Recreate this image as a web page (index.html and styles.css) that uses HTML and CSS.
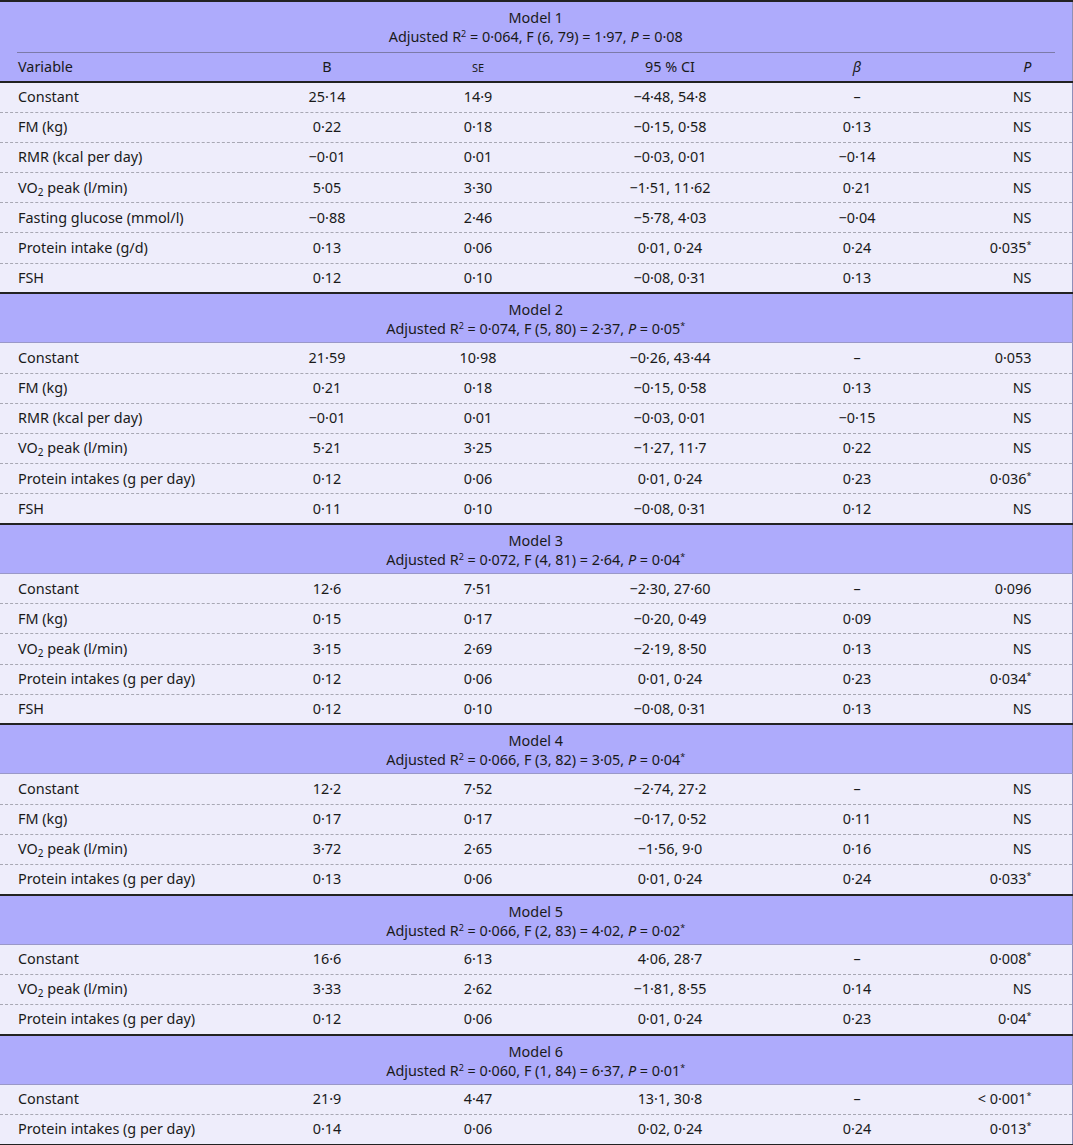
FILE: index.html
```html
<!DOCTYPE html>
<html lang="en">
<head>
  <meta charset="UTF-8">
  <title>Regression models</title>
  <link rel="stylesheet" href="styles.css">
</head>
<body>
  <table class="models">
    <colgroup>
      <col class="c-var"><col class="c-b"><col class="c-se"><col class="c-ci"><col class="c-beta"><col class="c-p">
    </colgroup>

    <tbody class="group first">
      <tr class="model-head">
        <td colspan="6">
          <div class="title ruled">Model 1<br>Adjusted R<sup>2</sup> = 0·064, F (6, 79) = 1·97, <i>P</i> = 0·08</div>
        </td>
      </tr>
      <tr class="col-head">
        <td>Variable</td><td>B</td><td><span class="sc">se</span></td><td>95 % CI</td><td><i>β</i></td><td><i>P</i></td>
      </tr>
      <tr><td>Constant</td><td>25·14</td><td>14·9</td><td>−4·48, 54·8</td><td>–</td><td>NS</td></tr>
      <tr><td>FM (kg)</td><td>0·22</td><td>0·18</td><td>−0·15, 0·58</td><td>0·13</td><td>NS</td></tr>
      <tr><td>RMR (kcal per day)</td><td>−0·01</td><td>0·01</td><td>−0·03, 0·01</td><td>−0·14</td><td>NS</td></tr>
      <tr><td>VO<sub>2</sub> peak (l/min)</td><td>5·05</td><td>3·30</td><td>−1·51, 11·62</td><td>0·21</td><td>NS</td></tr>
      <tr><td>Fasting glucose (mmol/l)</td><td>−0·88</td><td>2·46</td><td>−5·78, 4·03</td><td>−0·04</td><td>NS</td></tr>
      <tr><td>Protein intake (g/d)</td><td>0·13</td><td>0·06</td><td>0·01, 0·24</td><td>0·24</td><td>0·035<sup>*</sup></td></tr>
      <tr><td>FSH</td><td>0·12</td><td>0·10</td><td>−0·08, 0·31</td><td>0·13</td><td>NS</td></tr>
    </tbody>

    <tbody class="group">
      <tr class="model-head">
        <td colspan="6"><div class="title">Model 2<br>Adjusted R<sup>2</sup> = 0·074, F (5, 80) = 2·37, <i>P</i> = 0·05<sup>*</sup></div></td>
      </tr>
      <tr><td>Constant</td><td>21·59</td><td>10·98</td><td>−0·26, 43·44</td><td>–</td><td>0·053</td></tr>
      <tr><td>FM (kg)</td><td>0·21</td><td>0·18</td><td>−0·15, 0·58</td><td>0·13</td><td>NS</td></tr>
      <tr><td>RMR (kcal per day)</td><td>−0·01</td><td>0·01</td><td>−0·03, 0·01</td><td>−0·15</td><td>NS</td></tr>
      <tr><td>VO<sub>2</sub> peak (l/min)</td><td>5·21</td><td>3·25</td><td>−1·27, 11·7</td><td>0·22</td><td>NS</td></tr>
      <tr><td>Protein intakes (g per day)</td><td>0·12</td><td>0·06</td><td>0·01, 0·24</td><td>0·23</td><td>0·036<sup>*</sup></td></tr>
      <tr><td>FSH</td><td>0·11</td><td>0·10</td><td>−0·08, 0·31</td><td>0·12</td><td>NS</td></tr>
    </tbody>

    <tbody class="group">
      <tr class="model-head">
        <td colspan="6"><div class="title">Model 3<br>Adjusted R<sup>2</sup> = 0·072, F (4, 81) = 2·64, <i>P</i> = 0·04<sup>*</sup></div></td>
      </tr>
      <tr><td>Constant</td><td>12·6</td><td>7·51</td><td>−2·30, 27·60</td><td>–</td><td>0·096</td></tr>
      <tr><td>FM (kg)</td><td>0·15</td><td>0·17</td><td>−0·20, 0·49</td><td>0·09</td><td>NS</td></tr>
      <tr><td>VO<sub>2</sub> peak (l/min)</td><td>3·15</td><td>2·69</td><td>−2·19, 8·50</td><td>0·13</td><td>NS</td></tr>
      <tr><td>Protein intakes (g per day)</td><td>0·12</td><td>0·06</td><td>0·01, 0·24</td><td>0·23</td><td>0·034<sup>*</sup></td></tr>
      <tr><td>FSH</td><td>0·12</td><td>0·10</td><td>−0·08, 0·31</td><td>0·13</td><td>NS</td></tr>
    </tbody>

    <tbody class="group">
      <tr class="model-head">
        <td colspan="6"><div class="title">Model 4<br>Adjusted R<sup>2</sup> = 0·066, F (3, 82) = 3·05, <i>P</i> = 0·04<sup>*</sup></div></td>
      </tr>
      <tr><td>Constant</td><td>12·2</td><td>7·52</td><td>−2·74, 27·2</td><td>–</td><td>NS</td></tr>
      <tr><td>FM (kg)</td><td>0·17</td><td>0·17</td><td>−0·17, 0·52</td><td>0·11</td><td>NS</td></tr>
      <tr><td>VO<sub>2</sub> peak (l/min)</td><td>3·72</td><td>2·65</td><td>−1·56, 9·0</td><td>0·16</td><td>NS</td></tr>
      <tr><td>Protein intakes (g per day)</td><td>0·13</td><td>0·06</td><td>0·01, 0·24</td><td>0·24</td><td>0·033<sup>*</sup></td></tr>
    </tbody>

    <tbody class="group">
      <tr class="model-head">
        <td colspan="6"><div class="title">Model 5<br>Adjusted R<sup>2</sup> = 0·066, F (2, 83) = 4·02, <i>P</i> = 0·02<sup>*</sup></div></td>
      </tr>
      <tr><td>Constant</td><td>16·6</td><td>6·13</td><td>4·06, 28·7</td><td>–</td><td>0·008<sup>*</sup></td></tr>
      <tr><td>VO<sub>2</sub> peak (l/min)</td><td>3·33</td><td>2·62</td><td>−1·81, 8·55</td><td>0·14</td><td>NS</td></tr>
      <tr><td>Protein intakes (g per day)</td><td>0·12</td><td>0·06</td><td>0·01, 0·24</td><td>0·23</td><td>0·04<sup>*</sup></td></tr>
    </tbody>

    <tbody class="group">
      <tr class="model-head">
        <td colspan="6"><div class="title">Model 6<br>Adjusted R<sup>2</sup> = 0·060, F (1, 84) = 6·37, <i>P</i> = 0·01<sup>*</sup></div></td>
      </tr>
      <tr><td>Constant</td><td>21·9</td><td>4·47</td><td>13·1, 30·8</td><td>–</td><td>&lt; 0·001<sup>*</sup></td></tr>
      <tr><td>Protein intakes (g per day)</td><td>0·14</td><td>0·06</td><td>0·02, 0·24</td><td>0·24</td><td>0·013<sup>*</sup></td></tr>
    </tbody>
  </table>
</body>
</html>
```

FILE: styles.css
```css
:root {
  --head-bg: #aeabfc;
  --row-bg: #eeedfb;
  --rule-dark: #222;
  --rule-light: #9a98c8;
  --text: #1a1a1a;
}
* { box-sizing: border-box; margin: 0; padding: 0; }
body {
  font-family: "Noto Sans", "Open Sans", sans-serif;
  font-size: 14.4px;
  color: var(--text);
  background: #fff;
}
.models {
  width: 1072px;
  border-collapse: collapse;
  table-layout: fixed;
  border-top: 2px solid var(--rule-dark);
  border-bottom: 2px solid var(--rule-dark);
  border-right: 1px solid #8f8fb8;
}
.c-var { width: 240px; }
.c-b { width: 174px; }
.c-se { width: 128px; }
.c-ci { width: 256px; }
.c-beta { width: 118px; }
.c-p { width: 156px; }

.group + .group { border-top: 2px solid var(--rule-dark); }

.model-head td {
  background: var(--head-bg);
  text-align: center;
  padding: 6px 17px 4px;
  border-bottom: 1px solid var(--rule-light);
  line-height: 19px;
}
.first .model-head td {
  padding-bottom: 0;
  border-bottom: none;
}
.title.ruled {
  padding-bottom: 6px;
  border-bottom: 1px solid #7c7aa8;
}

.col-head td {
  background: var(--head-bg);
  height: 29px;
  border-bottom: 2px solid var(--rule-dark);
}

tr td {
  height: 30.2px;
  line-height: 18px;
  text-align: center;
  background: var(--row-bg);
  border-bottom: 1px dashed #a8a8b4;
  white-space: nowrap;
}
tr:last-child td { border-bottom: none; }
tr td:first-child { text-align: left; padding-left: 18px; }
tr td:last-child { text-align: right; padding-right: 40px; }
.model-head td:first-child { text-align: center; padding-left: 17px; padding-right: 17px; }

sup { font-size: 9px; vertical-align: 5px; line-height: 0; }
sub { font-size: 10px; vertical-align: -3px; line-height: 0; }
.sc { font-size: 11px; text-transform: uppercase; }
i { font-style: italic; }
```
